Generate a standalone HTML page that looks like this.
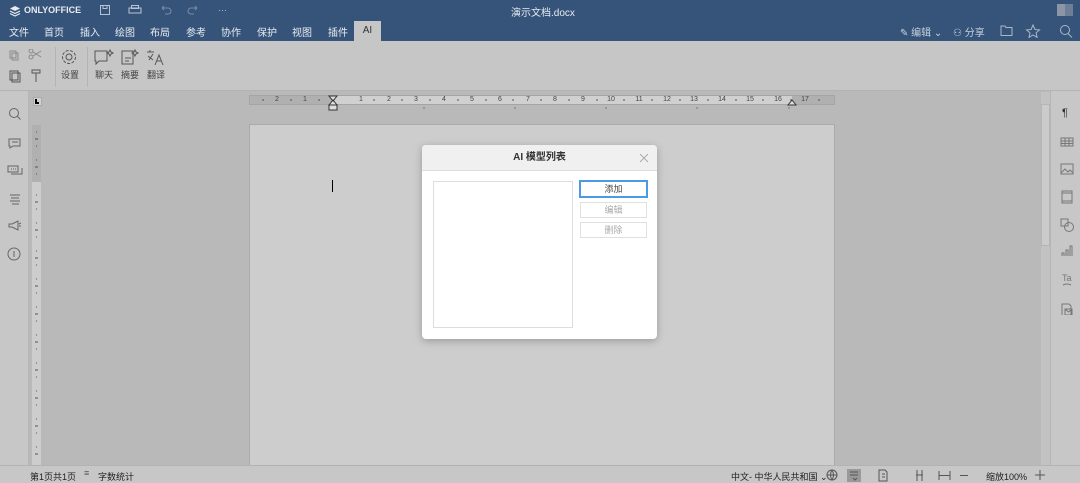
<!DOCTYPE html><html><head><meta charset="utf-8"><style>
*{margin:0;padding:0;box-sizing:border-box}
body{width:1080px;height:483px;overflow:hidden;background:#b9b9b9;font-family:"Liberation Sans","Noto Sans CJK SC",sans-serif;position:relative;font-size:10px;color:#333}
.abs{position:absolute}
#top{left:0;top:0;width:1080px;height:41px;background:#36547a}
.tab{position:absolute;top:24px;color:#e8ecf1;font-size:10px}
#tb{left:0;top:41px;width:1080px;height:50px;background:#c6c6c6;border-bottom:1px solid #b3b3b3}
.lbl{position:absolute;font-size:9px;color:#444}
#lp{left:0;top:91px;width:29px;height:374px;background:#c7c7c7;border-right:1px solid #b5b5b5}
#rp{left:1050px;top:91px;width:30px;height:374px;background:#c7c7c7;border-left:1px solid #b5b5b5}
#sb{left:0;top:465px;width:1080px;height:18px;background:#c7c7c7;border-top:1px solid #b3b3b3;font-size:9px;color:#222}
#page{left:249px;top:124px;width:586px;height:345px;background:#cdcdcd;border:1px solid #aaa}
#dlg{left:422px;top:145px;width:235px;height:194px;background:#fff;border-radius:4px;box-shadow:0 2px 8px rgba(0,0,0,.25)}
.btn{position:absolute;left:158px;width:67px;height:16px;border:1px solid #e0e0e0;font-size:9px;text-align:center;line-height:14px;color:#aaa;font-family:"Noto Sans CJK SC",sans-serif}
.rn{position:absolute;top:96px;font-size:7px;color:#444;line-height:8px;width:12px;margin-left:-6px;text-align:center}
</style></head><body>
<div id="top" class="abs">
 <svg class="abs" style="left:9px;top:5px" width="12" height="12" viewBox="0 0 12 12"><path d="M6 1L11 3.5 6 6 1 3.5Z" fill="#e8ecf1"/><path d="M1 6L6 8.5 11 6M1 8.5L6 11 11 8.5" stroke="#e8ecf1" fill="none" stroke-width="1.2"/></svg>
 <div class="abs" style="left:24px;top:5px;color:#e8ecf1;font-size:9px;font-weight:bold">ONLYOFFICE</div>
 <svg class="abs" style="left:100px;top:4px" width="135" height="12" stroke="#b8c4d4" fill="none"><rect x="0.5" y="1.5" width="9" height="9"/><path d="M3 1.5v3h4v-3"/><rect x="29" y="4" width="12" height="5"/><rect x="31.5" y="1.5" width="7" height="3"/><path d="M62 4h6a3 3 0 010 6h-3M62 4l2-2M62 4l2 2" stroke="#7a8ca6"/><path d="M97 4h-6a3 3 0 000 6h3M97 4l-2-2M97 4l-2 2" stroke="#7a8ca6"/><text x="118" y="9" fill="#b8c4d4" stroke="none" font-size="9">···</text></svg>
 <div class="abs" style="left:511px;top:4px;color:#e8ecf1;font-size:10px">演示文档.docx</div>
 <div class="abs" style="left:1057px;top:4px;width:16px;height:12px;background:#6d7f96"></div><div class="abs" style="left:1057px;top:4px;width:8px;height:12px;background:#8c96a4"></div>
 <span class="tab" style="left:9px">文件</span><span class="tab" style="left:44px">首页</span><span class="tab" style="left:80px">插入</span><span class="tab" style="left:115px">绘图</span><span class="tab" style="left:150px">布局</span><span class="tab" style="left:186px">参考</span><span class="tab" style="left:221px">协作</span><span class="tab" style="left:257px">保护</span><span class="tab" style="left:292px">视图</span><span class="tab" style="left:328px">插件</span>
 <div class="abs" style="left:354px;top:21px;width:27px;height:20px;background:#c6c6c6;color:#333;text-align:center;line-height:20px;font-size:10px">AI</div>
 <div class="abs" style="left:900px;top:24px;color:#c8d1dd;font-size:10px">✎ 编辑 ⌄</div>
 <div class="abs" style="left:953px;top:24px;color:#c8d1dd;font-size:10px">⚇ 分享</div>
 <svg class="abs" style="left:1000px;top:24px" width="75" height="14" stroke="#a9b6c8" fill="none"><path d="M1 2h4l1 1.5h6v8H1z"/><path d="M33 1l2 4.5 4.5.4-3.4 3 1 4.5L33 11l-4 2.4 1-4.5-3.4-3 4.5-.4z"/><circle cx="65" cy="6" r="4.5"/><path d="M68 9.5l4 4"/></svg>
</div>
<div id="tb" class="abs">
 <svg class="abs" style="left:8px;top:8px" width="40" height="36" stroke="#8a8a8a" fill="none"><rect x="2" y="2" width="6" height="7"/><rect x="4" y="4" width="6" height="7"/><circle cx="23" cy="8" r="2"/><circle cx="23" cy="2" r="2"/><path d="M25 3l8 5M25 7l8-5"/><rect x="2" y="22" width="8" height="9" stroke="#555"/><rect x="4" y="24" width="8" height="9" stroke="#555"/><path d="M24 21h8v3h-8zM28 24v9" stroke="#555"/></svg>
 <div class="abs" style="left:55px;top:6px;width:1px;height:40px;background:#b4b4b4"></div>
 <svg class="abs" style="left:61px;top:8px" width="16" height="16" stroke="#555" fill="none"><circle cx="8" cy="8" r="3"/><circle cx="8" cy="8" r="6.5" stroke-dasharray="3 1.5"/></svg>
 <span class="lbl" style="left:61px;top:27px">设置</span>
 <div class="abs" style="left:87px;top:6px;width:1px;height:40px;background:#b4b4b4"></div>
 <svg class="abs" style="left:94px;top:7px" width="75" height="18" stroke="#555" fill="none"><path d="M1 3h12v10H5l-3 3v-3H1z"/><path d="M16 2l1 2 2 1-2 1-1 2-1-2-2-1 2-1z"/><path d="M28 3h11v13H28zM31 10h6M31 13h4"/><path d="M41 2l1 2 2 1-2 1-1 2-1-2-2-1 2-1z"/><path d="M56 2v2M53 4h7M54 8l5 4M59 6l-4 6"/><path d="M61 17l4-10 4 10M62.5 13h5"/></svg>
 <span class="lbl" style="left:95px;top:27px">聊天</span><span class="lbl" style="left:121px;top:27px">摘要</span><span class="lbl" style="left:147px;top:27px">翻译</span>
</div>
<div id="lp" class="abs">
 <svg class="abs" style="left:7px;top:14px" width="16" height="160" stroke="#666" fill="none"><circle cx="7" cy="8" r="4.5"/><path d="M10 11l3.5 3.5"/><path d="M2 34h11v7H6l-3 2v-2H2zM5 37h6"/><path d="M1 61h10v6H1zM4 69h11v-6M4 64h1M6 64h1M8 64h1"/><path d="M3 90h10M4 93h8M3 96h10M5 99h7"/><path d="M2 119h3l6-3v9l-6-3H2zM12 119l2-1M12 121h2"/><circle cx="7" cy="149" r="6"/><path d="M7 146v6"/></svg>
</div>
<div class="abs" style="left:33px;top:97px;width:9px;height:9px;background:#d2d2d2;border:1px solid #aaa"></div>
<div class="abs" style="left:35px;top:99px;width:4px;height:5px;border-left:2px solid #000;border-bottom:2px solid #000"></div>
<div class="abs" style="left:32px;top:125px;width:9px;height:340px;background:#cdcdcd"></div>
<div class="abs" style="left:32px;top:125px;width:9px;height:57px;background:#b0b0b0"></div>
<svg class="abs" style="left:32px;top:125px" width="9" height="340" stroke="#555"><path d="M4 7h1M3 14h3M4 21h1M4 35h1M3 42h3M4 49h1M4 70h1M3 77h3M4 84h1M4 98h1M3 105h3M4 112h1M4 126h1M3 133h3M4 140h1M4 154h1M3 161h3M4 168h1M4 182h1M3 189h3M4 196h1M4 210h1M3 217h3M4 224h1M4 238h1M3 245h3M4 252h1M4 266h1M3 273h3M4 280h1M4 294h1M3 301h3M4 308h1M4 322h1M3 329h3"/></svg>
<div class="abs" style="left:249px;top:95px;width:586px;height:10px;background:#b0b0b0;border:1px solid #a5a5a5"></div>
<div class="abs" style="left:333px;top:96px;width:459px;height:8px;background:#d0d0d0"></div>
<span class="rn" style="left:277px">2</span><span class="rn" style="left:305px">1</span>
<span class="rn" style="left:361px">1</span><span class="rn" style="left:389px">2</span><span class="rn" style="left:416px">3</span><span class="rn" style="left:444px">4</span><span class="rn" style="left:472px">5</span><span class="rn" style="left:500px">6</span><span class="rn" style="left:528px">7</span><span class="rn" style="left:555px">8</span><span class="rn" style="left:583px">9</span><span class="rn" style="left:611px">10</span><span class="rn" style="left:639px">11</span><span class="rn" style="left:667px">12</span><span class="rn" style="left:694px">13</span><span class="rn" style="left:722px">14</span><span class="rn" style="left:750px">15</span><span class="rn" style="left:778px">16</span><span class="rn" style="left:805px">17</span>
<svg class="abs" style="left:252px;top:95px" width="580" height="16" stroke="#555"><path d="M11 4v2M39 4v2M67 4v2M122 4v2M150 4v2M178 4v2M206 4v2M234 4v2M261 4v2M289 4v2M317 4v2M345 4v2M372 4v2M400 4v2M428 4v2M456 4v2M484 4v2M511 4v2M539 4v2M567 4v2"/><path d="M82 12v2M172 12v2M263 12v2M354 12v2M445 12v2M537 12v2" stroke="#777"/><path d="M77 1h8l-4 5zM77 10l4-5 4 5z" fill="#ddd" stroke="#333"/><rect x="77" y="10" width="8" height="5" fill="#ddd" stroke="#333"/><path d="M536 10l4-5 4 5z" fill="#ddd" stroke="#333"/></svg>
<div id="page" class="abs"></div>
<div class="abs" style="left:332px;top:180px;width:1px;height:12px;background:#000"></div>
<div class="abs" style="left:1041px;top:92px;width:9px;height:373px;background:#c2c2c2"></div>
<div class="abs" style="left:1041px;top:104px;width:9px;height:142px;background:#cbcbcb;border:1px solid #b5b5b5"></div>
<div id="rp" class="abs">
 <svg class="abs" style="left:8px;top:14px" width="16" height="210" stroke="#777" fill="none"><text x="3" y="11" font-size="11" fill="#333" stroke="none">¶</text><rect x="2" y="33" width="12" height="8"/><path d="M2 36h12M2 38.5h12M6 33v8M10 33v8"/><rect x="2" y="59" width="12" height="10"/><path d="M2 68l4-4 3 3 2-2 3 3"/><rect x="3" y="86" width="10" height="12"/><path d="M3 88h10M3 96h10"/><rect x="2" y="114" width="7" height="7"/><circle cx="10" cy="122" r="4.5"/><path d="M3 151v-3h2v3M7 151v-6h2v6M11 151v-10h2v10"/><text x="3" y="176" font-size="9" fill="#777" stroke="none">Ta</text><path d="M4 180q4-2 8 0"/><path d="M3 199h7l2 2v10H3z"/><path d="M6 204h7v6H6zM6 204l3.5 3 3.5-3"/></svg>
</div>
<div id="sb" class="abs">
 <span class="abs" style="left:30px;top:4px">第1页共1页</span>
 <span class="abs" style="left:84px;top:2px;color:#555">≡</span><span class="abs" style="left:98px;top:4px">字数统计</span>
 <span class="abs" style="left:731px;top:4px">中文- 中华人民共和国 ⌄</span>
 <svg class="abs" style="left:826px;top:3px" width="220" height="13" stroke="#555" fill="none"><circle cx="6" cy="6" r="5"/><path d="M1 6h10M6 1q-3 5 0 10M6 1q3 5 0 10"/><rect x="21" y="-1" width="14" height="14" fill="#999" stroke="none"/><path d="M24 3h8M24 6h8M27 9l2 2 2-2"/><path d="M53 1h6l2 2v9h-8zM56 5h3M56 8h3"/><path d="M91 1v11M96 1v11M90 6h7" /><path d="M113 2v9M124 2v9M113 6.5h11"/><path d="M134 6.5h8"/><path d="M214 1v10M209 6h10"/></svg>
 <span class="abs" style="left:986px;top:4px">缩放100%</span>
</div>
<div id="dlg" class="abs">
 <div class="abs" style="left:0;top:0;width:235px;height:26px;background:#f0f0f0;border-bottom:1px solid #ddd;border-radius:4px 4px 0 0;text-align:center;line-height:26px;font-size:10px;font-weight:bold;color:#333">AI 模型列表</div>
 <svg class="abs" style="left:217px;top:8px" width="10" height="10" stroke="#aaa"><path d="M1 1l8 8M9 1l-8 8"/></svg>
 <div class="abs" style="left:11px;top:36px;width:140px;height:147px;border:1px solid #ddd"></div>
 <div class="btn" style="top:35px;height:18px;left:157px;width:69px;border:2px solid #4a9be3;color:#444;line-height:14px">添加</div>
 <div class="btn" style="top:57px">编辑</div>
 <div class="btn" style="top:77px">删除</div>
</div>
</body></html>
